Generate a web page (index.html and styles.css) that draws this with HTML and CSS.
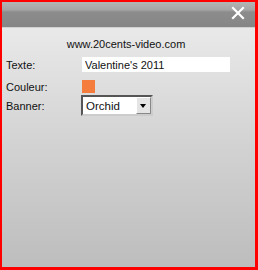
FILE: index.html
```html
<!DOCTYPE html>
<html lang="fr">
  <head>
    <meta charset="UTF-8">
    <title>Banner</title>
    <link rel="stylesheet" href="styles.css">
  </head>
  <body>
    <div class="frame">
      <div class="titlebar">
        <svg class="close" width="14" height="14" viewBox="0 0 14 14">
          <path d="M2 2 L12 12 M12 2 L2 12" stroke="#fff" stroke-width="2.2" stroke-linecap="square"/>
        </svg>
      </div>
      <div class="panel">
        <div class="site">www.20cents-video.com</div>
        <div class="row row-text">
          <span class="label">Texte:</span>
          <input class="text" type="text" value="Valentine's 2011">
        </div>
        <div class="row row-color">
          <span class="label">Couleur:</span>
          <span class="swatch"></span>
        </div>
        <div class="row">
          <span class="label">Banner:</span>
          <div class="select">
            <span class="value">Orchid</span>
            <span class="arrow"></span>
          </div>
        </div>
      </div>
    </div>
  </body>
</html>
```
FILE: styles.css
```css
html, body {
  margin: 0;
  padding: 0;
}

body {
  width: 258px;
  height: 270px;
  font-family: "Liberation Sans", Arial, sans-serif;
  font-size: 11px;
  color: #111;
}

.frame {
  box-sizing: border-box;
  width: 258px;
  height: 270px;
  border: 2px solid #f00;
  border-right-width: 3px;
  border-bottom-width: 3px;
  display: flex;
  flex-direction: column;
}

.titlebar {
  height: 25px;
  background: linear-gradient(#b4b4b4 0px, #a4a4a4 8px, #8c8c8c 10px, #868686 24px);
  border-bottom: 1px solid #d0d0d0;
  display: flex;
  justify-content: flex-end;
  align-items: center;
  padding-right: 10px;
}

.close {
  display: block;
  margin-top: -3px;
}

.panel {
  flex: 1;
  background: linear-gradient(#e9e9e9, #d4d4d4 45%, #bdbdbd);
  padding: 10px 0 0 4px;
}

.site {
  text-align: center;
  margin-bottom: 7px;
  padding-right: 9px;
}

.row {
  display: flex;
  align-items: center;
}

.row-text {
  margin-bottom: 8px;
}

.row-color {
  margin-bottom: 2px;
}

.label {
  width: 76px;
}

.text {
  box-sizing: border-box;
  width: 148px;
  height: 15px;
  border: 0;
  padding: 0 0 0 3px;
  background: #fff;
  font: 11px "Liberation Sans", Arial, sans-serif;
  color: #111;
}

.swatch {
  width: 13px;
  height: 13px;
  background: #f47d3e;
}

.select {
  box-sizing: border-box;
  width: 72px;
  height: 21px;
  margin-left: -1px;
  border: 2px solid #555;
  border-right-color: #ccc;
  border-bottom-color: #ccc;
  background: #fff;
  display: flex;
  align-items: center;
  justify-content: space-between;
  padding-left: 3px;
}

.value {
  font-size: 11.5px;
}

.arrow {
  box-sizing: border-box;
  width: 15px;
  height: 17px;
  background: #e4e4e4;
  border: 1px solid #fff;
  border-right-color: #888;
  border-bottom-color: #888;
  position: relative;
}

.arrow::after {
  content: "";
  position: absolute;
  left: 3px;
  top: 6px;
  border-left: 3px solid transparent;
  border-right: 3px solid transparent;
  border-top: 4px solid #000;
}
```
